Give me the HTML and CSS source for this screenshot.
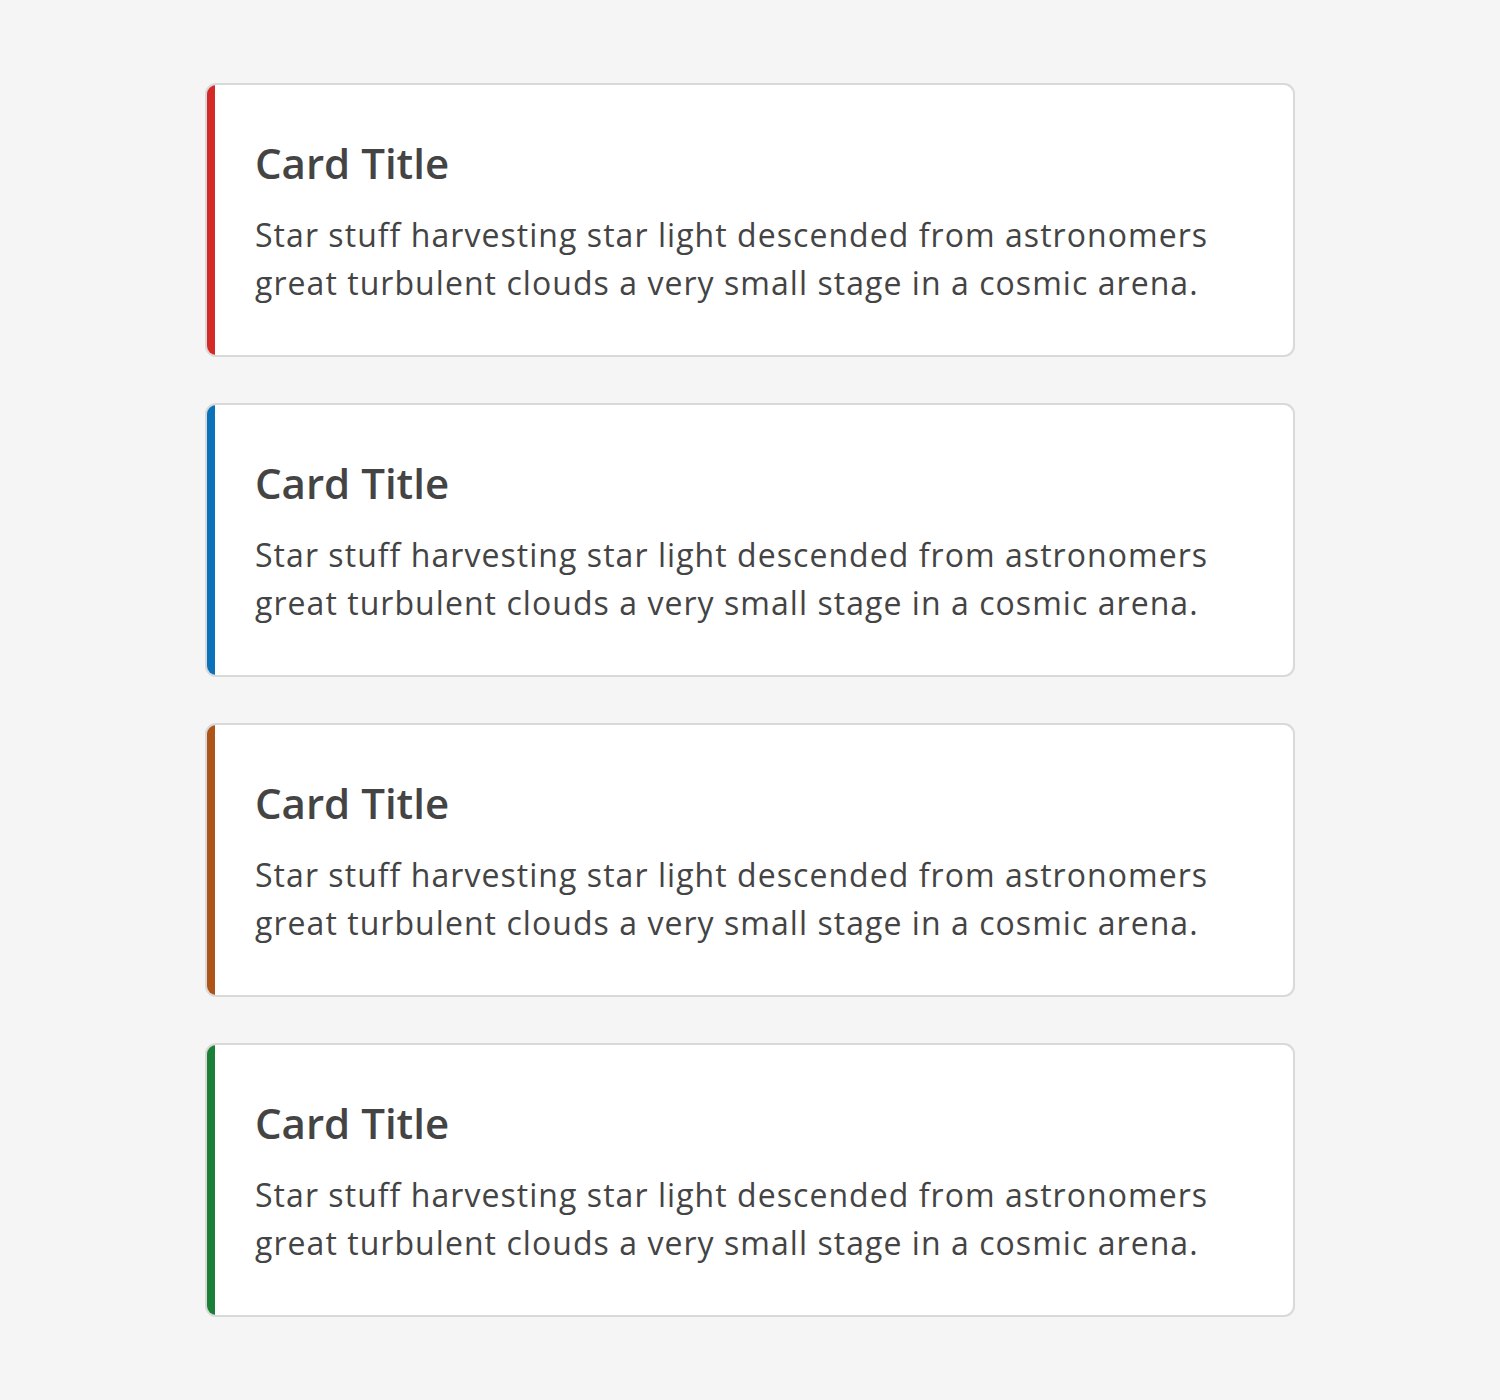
FILE: index.html
```html
<!DOCTYPE html>
<html>
<head>
<meta charset="utf-8">
<link rel="stylesheet" href="styles.css">
</head>
<body>
<main class="stack">
  <article class="card card-red">
    <div class="stripe"></div>
    <div class="content">
      <h2 class="title">Card Title</h2>
      <p class="text">Star stuff harvesting star light descended from astronomers great turbulent clouds a very small stage in a cosmic arena.</p>
    </div>
  </article>
  <article class="card card-blue">
    <div class="stripe"></div>
    <div class="content">
      <h2 class="title">Card Title</h2>
      <p class="text">Star stuff harvesting star light descended from astronomers great turbulent clouds a very small stage in a cosmic arena.</p>
    </div>
  </article>
  <article class="card card-brown">
    <div class="stripe"></div>
    <div class="content">
      <h2 class="title">Card Title</h2>
      <p class="text">Star stuff harvesting star light descended from astronomers great turbulent clouds a very small stage in a cosmic arena.</p>
    </div>
  </article>
  <article class="card card-green">
    <div class="stripe"></div>
    <div class="content">
      <h2 class="title">Card Title</h2>
      <p class="text">Star stuff harvesting star light descended from astronomers great turbulent clouds a very small stage in a cosmic arena.</p>
    </div>
  </article>
</main>
</body>
</html>
```

FILE: styles.css
```css
html, body {
  margin: 0;
  padding: 0;
  background: #f5f5f5;
}
body {
  font-family: "Open Sans", "Liberation Sans", sans-serif;
  color: #444444;
}
.stack {
  width: 1090px;
  margin: 0 auto;
  padding-top: 83px;
  display: flex;
  flex-direction: column;
  gap: 46px;
}
.card {
  display: flex;
  background: #ffffff;
  border: 2px solid #d9d9d9;
  border-radius: 11px;
  overflow: hidden;
}
.stripe {
  width: 8px;
  flex: none;
}
.card-red .stripe { background: #d42a27; }
.card-blue .stripe { background: #0b72b9; }
.card-brown .stripe { background: #ad5418; }
.card-green .stripe { background: #1a7f37; }
.content {
  padding: 56px 40px 48px 40px;
}
.title {
  margin: 0 0 26px 0;
  font-size: 42px;
  line-height: 44px;
  font-weight: 600;
  letter-spacing: 0;
}
.text {
  margin: 0;
  font-size: 32px;
  line-height: 48px;
  letter-spacing: 1.05px;
}
```
